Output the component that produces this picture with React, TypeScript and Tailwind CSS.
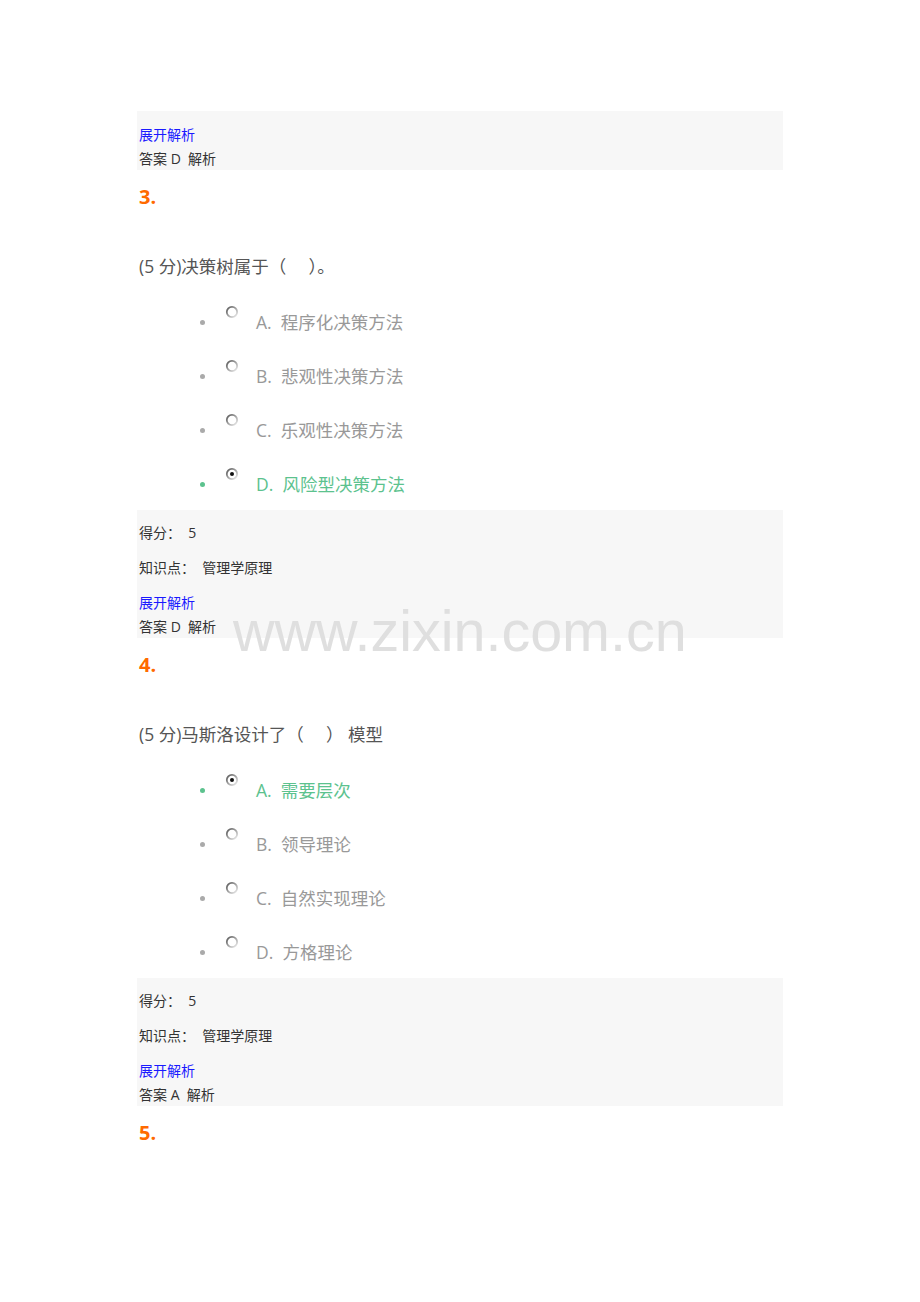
import React from 'react'

type Option = {
  key: string
  text: string
  selected?: boolean
}

type Question = {
  no: number
  title: string
  options: Option[]
  answer: string
}

const questions: Question[] = [
  {
    no: 3,
    title: '(5 分)决策树属于（　 ）。',
    options: [
      { key: 'A', text: '程序化决策方法' },
      { key: 'B', text: '悲观性决策方法' },
      { key: 'C', text: '乐观性决策方法' },
      { key: 'D', text: '风险型决策方法', selected: true },
    ],
    answer: 'D',
  },
  {
    no: 4,
    title: '(5 分)马斯洛设计了（　 ） 模型',
    options: [
      { key: 'A', text: '需要层次', selected: true },
      { key: 'B', text: '领导理论' },
      { key: 'C', text: '自然实现理论' },
      { key: 'D', text: '方格理论' },
    ],
    answer: 'A',
  },
]

const font = "font-['Open_Sans','Noto_Sans_CJK_SC',sans-serif]"

// Old style radio: dark ring top-left fading out to the bottom-right
const Radio = ({ checked }: { checked?: boolean }) => (
  <svg width="14" height="14" viewBox="0 0 14 14" className="shrink-0 mt-[10px] ml-[20px]">
    <defs>
      <linearGradient id={checked ? 'rg-on' : 'rg-off'} x1="0" y1="0" x2="1" y2="1">
        <stop offset="0%" stopColor="#555" />
        <stop offset="55%" stopColor="#aaa" />
        <stop offset="100%" stopColor="#f2f2f2" />
      </linearGradient>
    </defs>
    <circle cx="7" cy="7" r="5.2" fill="#fff" stroke={`url(#${checked ? 'rg-on' : 'rg-off'})`} strokeWidth="1.8" />
    {checked && <circle cx="7" cy="7" r="2" fill="#111" />}
  </svg>
)

const InfoBox = ({ answer, full }: { answer: string; full?: boolean }) => (
  <div className={`bg-[#f7f7f7] ml-[-2px] w-[646px] pl-[2px] text-[14px] leading-[24px] text-[#333] ${full ? 'pt-[11px] h-[128px]' : 'pt-3 h-[59px]'}`}>
    {full && (
      <>
        <p className="mb-[11px]">得分：&nbsp; 5</p>
        <p className="mb-[11px]">知识点：&nbsp; 管理学原理</p>
      </>
    )}
    <p className="text-[#1a1aff]">展开解析</p>
    <p>答案 {answer}&nbsp; 解析</p>
  </div>
)

const QuestionBlock = ({ q }: { q: Question }) => (
  <div>
    <div className="mt-3 text-[20px] leading-[30px] font-bold text-[#ff6a00]">{q.no}.</div>
    <div className="mt-[39px] text-[17.5px] leading-[30px] text-[#555]">{q.title}</div>
    <ul className="mt-[14px] pl-[61px]">
      {q.options.map((o) => (
        <li key={o.key} className="flex items-start h-[54px]">
          <span className={`shrink-0 mt-[25px] w-[5px] h-[5px] rounded-full ${o.selected ? 'bg-[#5cc28e]' : 'bg-[#aaa]'}`} />
          <Radio checked={o.selected} />
          <span className={`ml-[17px] mt-[12px] text-[17.5px] leading-[30px] ${o.selected ? 'text-[#5cc28e]' : 'text-[#999]'}`}>
            {o.key}.&nbsp; {o.text}
          </span>
        </li>
      ))}
    </ul>
    <div className="mt-[-1px]">
      <InfoBox answer={q.answer} full />
    </div>
  </div>
)

export default function App() {
  return (
    <div className={`relative w-[920px] h-[1302px] bg-white overflow-hidden ${font}`}>
      <div className="pl-[139px] pt-[111px]">
        <InfoBox answer="D" />
        {questions.map((q) => (
          <QuestionBlock key={q.no} q={q} />
        ))}
        <div className="mt-3 text-[20px] leading-[30px] font-bold text-[#ff6a00]">5.</div>
      </div>

      {/* watermark */}
      <div className="absolute left-[233px] top-[603px] text-[57.5px] leading-none text-[#dcdcdc]/90 font-['Liberation_Sans',sans-serif] pointer-events-none select-none">
        www.zixin.com.cn
      </div>
    </div>
  )
}
